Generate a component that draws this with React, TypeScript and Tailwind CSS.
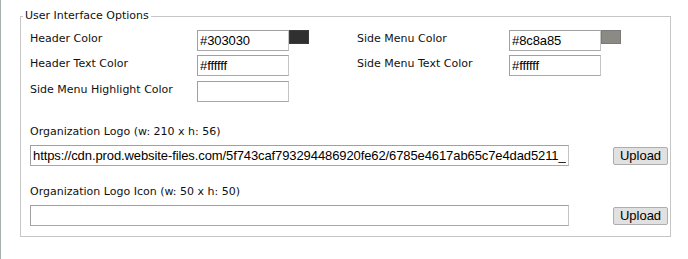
import type { ReactNode } from 'react'

const labelFont = { fontFamily: '"DejaVu Sans", Verdana, sans-serif' }

function TextBox({ value, width }: { value: string; width: string }) {
  return (
    <input
      readOnly
      value={value}
      className={`${width} h-[21px] shrink-0 border border-t-[#a0a0a0] border-l-[#a0a0a0] border-r-[#c4c4c4] border-b-[#a8a8a8] bg-white px-[2px] text-[13px] tracking-[-0.1px] text-black outline-none font-['Liberation_Sans',Arial,sans-serif]`}
    />
  )
}

function ColorField({ label, value, labelWidth, swatch }: { label: string; value: string; labelWidth: string; swatch?: string }) {
  return (
    <div className="flex items-start">
      <span className={`${labelWidth} shrink-0 pt-[2px] text-[11px] leading-[13px] text-[#111]`}>{label}</span>
      <TextBox value={value} width="w-[92px]" />
      {swatch && <span className="h-[14px] w-[20px] shrink-0 border border-[#555]/30" style={{ backgroundColor: swatch }} />}
    </div>
  )
}

function UploadRow({ label, value }: { label: ReactNode; value: string }) {
  return (
    <div className="flex flex-col">
      <span className="text-[11px] leading-[13px] text-[#111]">{label}</span>
      <div className="mt-[7px] flex items-center">
        <TextBox value={value} width="w-[539px]" />
        <button className="ml-[44px] h-[18px] w-[55px] rounded-[2px] border border-[#adadad] bg-[#e1e1e1] text-[13px] leading-none text-black font-['Liberation_Sans',Arial,sans-serif]">
          Upload
        </button>
      </div>
    </div>
  )
}

export default function App() {
  return (
    <div className="h-[259px] w-[688px] border-l border-[#a8aeae] bg-white pl-[19px] pt-[8px]" style={labelFont}>
      <fieldset className="w-[651px] border border-[#c6c6c6] pb-[10px] pl-[9px] pt-[6px]">
        <legend className="-ml-[7px] px-[2px] text-[11px] leading-4 text-[#111]">User Interface Options</legend>
        <div className="flex">
          <div className="flex w-[327px] flex-col">
            <ColorField label="Header Color" value="#303030" labelWidth="w-[167px]" swatch="#303030" />
            <div className="mt-[4px]">
              <ColorField label="Header Text Color" value="#ffffff" labelWidth="w-[167px]" />
            </div>
            <div className="mt-[5px]">
              <ColorField label="Side Menu Highlight Color" value="" labelWidth="w-[167px]" />
            </div>
          </div>
          <div className="flex flex-col">
            <ColorField label="Side Menu Color" value="#8c8a85" labelWidth="w-[152px]" swatch="#8c8a85" />
            <div className="mt-[4px]">
              <ColorField label="Side Menu Text Color" value="#ffffff" labelWidth="w-[152px]" />
            </div>
          </div>
        </div>
        <div className="mt-[23px]">
          <UploadRow
            label="Organization Logo (w: 210 x h: 56)"
            value="https://cdn.prod.website-files.com/5f743caf793294486920fe62/6785e4617ab65c7e4dad5211_logo.png"
          />
        </div>
        <div className="mt-[19px]">
          <UploadRow label="Organization Logo Icon (w: 50 x h: 50)" value="" />
        </div>
      </fieldset>
    </div>
  )
}
